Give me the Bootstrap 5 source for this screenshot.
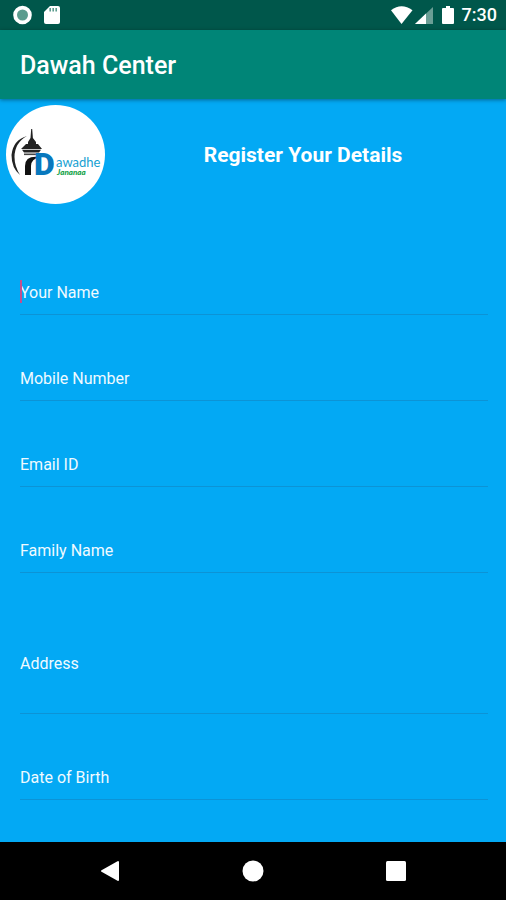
<!DOCTYPE html>
<html lang="en">
<head>
<meta charset="utf-8">
<meta name="viewport" content="width=device-width, initial-scale=1">
<title>Dawah Center</title>
<link href="https://cdn.jsdelivr.net/npm/bootstrap@5.3.0/dist/css/bootstrap.min.css" rel="stylesheet">
<style>
  body { font-family: Roboto, "Liberation Sans", sans-serif; background: #03a9f4; }
  svg { display: block; }
  .status-bar { background: #00574b; height: 30px; padding: 0 9px 0 13px; font-size: 18px; line-height: 30px; }
  .status-icons { gap: 12px; }
  .app-bar { background: #008577; padding: 20px 20px 17px; box-shadow: 0 1px 4px rgba(0,0,0,.4); z-index: 1; }
  .app-title { font-size: 25px; line-height: 32px; font-weight: 500; }
  .intro { padding: 6px 5px 0 6px; }
  .page-title { font-size: 21px; line-height: 28px; font-weight: 700; }
  .fields { padding: 66px 18px 42px 20px; gap: 41px; }
  .line-field { height: 45px; padding: 0; font-size: 16px; line-height: 24px; color: #fff; background: transparent; border: 0; border-bottom: 1px solid #0c93d6; border-radius: 0; resize: none; }
  .line-field:focus { color: #fff; background: transparent; box-shadow: none; border-color: #ff4081; }
  .line-field::placeholder { color: #f0faff; opacity: 1; }
  .tall-field { height: 100px; padding: 38px 0 37px; }
  .text-caret { position: absolute; left: 0; top: 10px; width: 2px; height: 23px; background: #c2508f; }
  .nav-keys { background: #000; height: 58px; padding: 0 39px; }
  .nav-key { width: 143px; height: 58px; padding: 0; border: 0; background: none; }
</style>
<script src="https://cdn.jsdelivr.net/npm/bootstrap@5.3.0/dist/js/bootstrap.bundle.min.js" defer></script>
</head>
<body>
<div class="d-flex flex-column min-vh-100">
  <div class="status-bar d-flex align-items-center justify-content-between text-white">
    <div class="status-icons d-flex align-items-center">
      <svg width="19" height="20" viewBox="0 0 19 20" aria-hidden="true"><circle cx="9.5" cy="10" r="7.4" fill="#5b9c8e" stroke="#fff" stroke-width="3.8"/></svg>
      <svg width="16" height="20" viewBox="0 0 16 20" aria-hidden="true"><path fill="#fff" d="M6 1h8a2 2 0 0 1 2 2v14a2 2 0 0 1-2 2H2a2 2 0 0 1-2-2V7z"/><path stroke="#5b9c8e" stroke-width="1.6" d="M6.2 3v3.5M9.2 3v3.5M12.2 3v3.5"/></svg>
    </div>
    <div class="d-flex align-items-center">
      <svg width="74" height="20" viewBox="0 0 74 20" aria-hidden="true"><path fill="#fff" d="M3 5.2Q13.5-2.8 24.500 5.200L13.500 19z"/><path fill="#6a9e95" d="M45 2v17H27z"/><path fill="#fff" d="M38 8.500V19H27z"/><path fill="#fff" d="M58 1h4v2h3q1 0 1 1v14q0 1-1 1H55q-1 0-1-1V4q0-1 1-1h3z"/></svg>
      <span class="fw-medium">7:30</span>
    </div>
  </div>

  <header class="app-bar position-relative text-white">
    <h1 class="app-title m-0">Dawah Center</h1>
  </header>

  <main class="flex-grow-1">
    <div class="intro d-flex align-items-center">
      <svg class="flex-shrink-0" width="99" height="99" viewBox="0 0 99 99" role="img" aria-label="Dawadhe logo">
        <circle cx="49.5" cy="49.5" r="49.5" fill="#fff"/>
        <path fill="#222" d="M21 31Q7 35 5.500 50Q5.500 63 14 70Q8.500 61 8.500 52Q8.500 38 21 31z"/>
        <path fill="#222" d="M25.200 24h1l.7 9 3.100 4v2h-8v-2l2.500-4zM20 39h12l4 5H15zM16 44.800h19l-2 2.600H18z"/>
        <path fill="#444" d="M18 48.500h15v1.600H18z"/>
        <path fill="#111" d="M34 52Q19 50 19 61v9h6V61Q25 54 34 52z"/>
        <text x="28" y="70" font-family="Roboto, sans-serif" font-size="32" font-weight="900" fill="#0878bd">D</text>
        <text x="50" y="62" font-family="Lato, sans-serif" font-size="13" fill="#169fd2">awadhe</text>
        <text x="51" y="70" font-family="Lato, sans-serif" font-size="8" font-weight="900" font-style="italic" fill="#16a34a">Jananaa</text>
      </svg>
      <h2 class="page-title flex-grow-1 text-center text-white m-0">Register Your Details</h2>
    </div>

    <form class="fields d-flex flex-column">
      <div class="position-relative">
        <input class="form-control line-field" type="text" aria-label="Your Name" placeholder="Your Name">
        <span class="text-caret"></span>
      </div>
      <input class="form-control line-field" type="tel" aria-label="Mobile Number" placeholder="Mobile Number">
      <input class="form-control line-field" type="email" aria-label="Email ID" placeholder="Email ID">
      <input class="form-control line-field" type="text" aria-label="Family Name" placeholder="Family Name">
      <textarea class="form-control line-field tall-field" aria-label="Address" placeholder="Address"></textarea>
      <input class="form-control line-field" type="text" aria-label="Date of Birth" placeholder="Date of Birth">
    </form>
  </main>

  <nav class="nav-keys d-flex align-items-center justify-content-around" aria-label="System">
    <button class="nav-key d-flex align-items-center justify-content-center" type="button" aria-label="Back"><svg width="22" height="22" viewBox="0 0 22 22"><path fill="#fff" stroke="#fff" stroke-width="2" stroke-linejoin="round" d="M19 2v18L3 11z"/></svg></button>
    <button class="nav-key d-flex align-items-center justify-content-center" type="button" aria-label="Home"><svg width="22" height="22" viewBox="0 0 22 22"><circle cx="11" cy="11" r="10.500" fill="#fff"/></svg></button>
    <button class="nav-key d-flex align-items-center justify-content-center" type="button" aria-label="Recent apps"><svg width="22" height="22" viewBox="0 0 22 22"><rect x="1" y="1" width="20" height="20" rx="1.500" fill="#fff"/></svg></button>
  </nav>
</div>
</body>
</html>
